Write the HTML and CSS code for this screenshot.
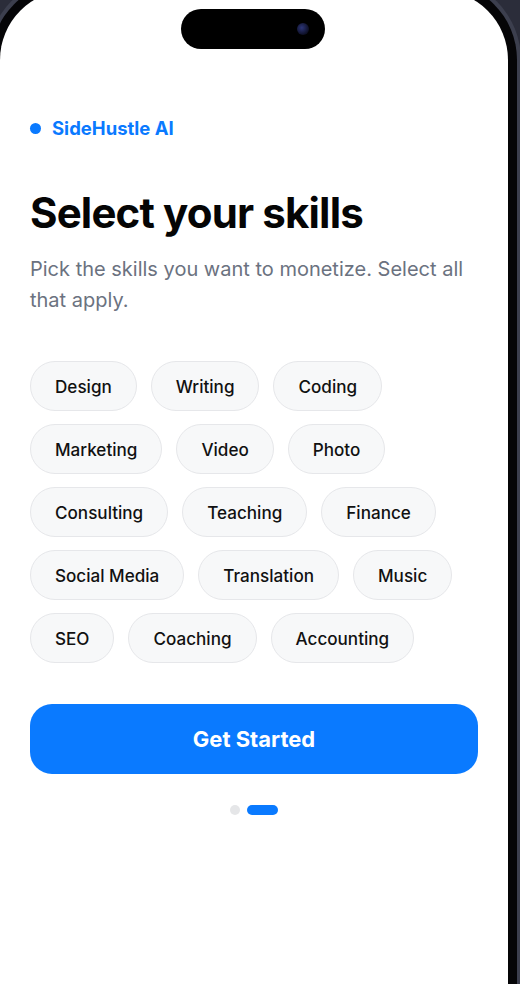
FILE: index.html
```html
<!DOCTYPE html>
<html>
  <head>
    <title>SideHustle AI - Select your skills</title>
    <meta name="viewport" content="width=device-width">
    <link rel="stylesheet" href="styles.css">
  </head>
  <body>
    <div class="screen">
      <div class="island">
        <span class="camera"></span>
      </div>

      <div class="content">
        <div class="brand">
          <span class="brand-dot"></span>
          <span>SideHustle AI</span>
        </div>

        <h1>Select your skills</h1>
        <p class="sub">Pick the skills you want to monetize. Select all that apply.</p>

        <div class="chips">
          <span class="chip">Design</span>
          <span class="chip">Writing</span>
          <span class="chip">Coding</span>
          <span class="chip">Marketing</span>
          <span class="chip">Video</span>
          <span class="chip">Photo</span>
          <span class="chip">Consulting</span>
          <span class="chip">Teaching</span>
          <span class="chip">Finance</span>
          <span class="chip">Social Media</span>
          <span class="chip">Translation</span>
          <span class="chip">Music</span>
          <span class="chip">SEO</span>
          <span class="chip">Coaching</span>
          <span class="chip">Accounting</span>
        </div>

        <div class="btn">Get Started</div>

        <div class="dots">
          <span class="dot"></span>
          <span class="dot active"></span>
        </div>
      </div>
    </div>
  </body>
</html>
```

FILE: styles.css
```css
* { margin: 0; padding: 0; box-sizing: border-box; }

body {
  height: 100vh;
  overflow: hidden;
  background: #2b2d3a;
  font-family: Inter, "Noto Sans", sans-serif;
}

.screen {
  width: 508px;
  height: 1010px;
  margin-top: -10px;
  background: #fff;
  border-radius: 70px 70px 0 0;
  box-shadow: 0 0 0 9px #050507, 0 0 0 13px #3c3f4e;
  overflow: hidden;
}

.island {
  display: flex;
  align-items: center;
  justify-content: flex-end;
  width: 144px;
  height: 40px;
  margin: 19px 0 0 181px;
  padding-right: 16px;
  background: #000;
  border-radius: 20px;
}

.camera {
  width: 12px;
  height: 12px;
  border-radius: 50%;
  background: radial-gradient(circle at 40% 40%, #2c3577, #0d0f24 70%);
}

.content {
  padding: 0 30px;
}

.brand {
  display: flex;
  align-items: center;
  gap: 11px;
  margin-top: 69px;
  color: #0a7aff;
  font-size: 18.5px;
  font-weight: 700;
  line-height: 20px;
}

.brand-dot {
  width: 11px;
  height: 11px;
  border-radius: 50%;
  background: #0a7aff;
}

h1 {
  margin-top: 50px;
  font-size: 42px;
  font-weight: 700;
  letter-spacing: -0.02em;
  line-height: 50px;
  color: #050505;
}

.sub {
  margin-top: 16px;
  font-size: 20px;
  line-height: 31px;
  color: #6b7280;
}

.chips {
  display: flex;
  flex-wrap: wrap;
  gap: 13px 14px;
  margin-top: 45px;
}

.chip {
  display: flex;
  align-items: center;
  height: 50px;
  padding: 0 24px;
  border: 1.5px solid #e6e7ea;
  border-radius: 25px;
  background: #f7f8f9;
  font-size: 17.1px;
  font-weight: 500;
  color: #111;
}

.btn {
  display: flex;
  align-items: center;
  justify-content: center;
  height: 70px;
  margin-top: 41px;
  border-radius: 22px;
  background: #0a7aff;
  color: #fff;
  font-size: 22px;
  font-weight: 700;
}

.dots {
  display: flex;
  justify-content: center;
  gap: 7px;
  margin-top: 31px;
}

.dot {
  width: 10px;
  height: 10px;
  border-radius: 5px;
  background: #e5e6e8;
}

.dot.active {
  width: 31px;
  background: #0a7aff;
}
```
